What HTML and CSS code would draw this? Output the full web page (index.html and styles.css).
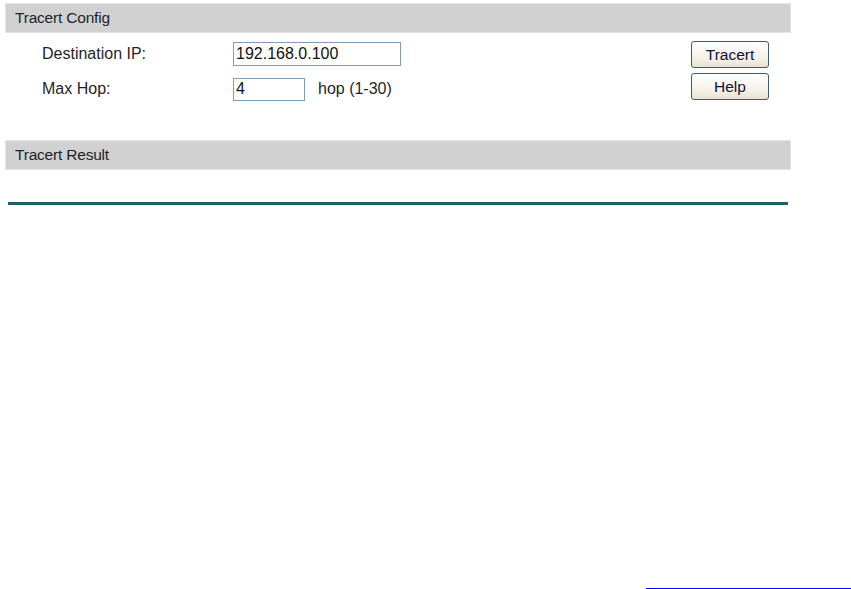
FILE: index.html
```html
<!DOCTYPE html>
<html lang="en">

<head>
    <meta charset="UTF-8">
    <meta name="viewport" content="width=device-width, initial-scale=1.0">
    <title>Tracert</title>
    <link rel="stylesheet" href="styles.css">
</head>

<body>
    <div class="page">
        <div class="title-bar">Tracert Config</div>
        <div class="config">
            <div class="fields">
                <div class="row">
                    <label class="lbl">Destination IP:</label>
                    <input type="text" class="ip-input" value="192.168.0.100">
                </div>
                <div class="row row-hop">
                    <label class="lbl">Max Hop:</label>
                    <input type="text" class="hop-input" value="4">
                    <span class="hint">hop (1-30)</span>
                </div>
            </div>
            <div class="actions">
                <button class="btn">Tracert</button>
                <button class="btn">Help</button>
            </div>
        </div>

        <div class="title-bar result-bar">Tracert Result</div>
        <div class="result"></div>
        <div class="divider"></div>
    </div>
    <div class="footer">
        <span class="foot-link"></span>
    </div>
</body>

</html>
```

FILE: styles.css
```css
* {
    box-sizing: border-box;
}

html,
body {
    height: 100%;
}

body {
    margin: 0;
    display: flex;
    flex-direction: column;
    font-family: "Liberation Sans", Arial, sans-serif;
    font-size: 16px;
    color: #1f1f2a;
    background: #fff;
}

.page {
    padding: 3px 0 0 5px;
}

.title-bar {
    width: 786px;
    height: 30px;
    line-height: 28px;
    padding-left: 9px;
    font-size: 15.5px;
    letter-spacing: -0.2px;
    background: #d1d1d1;
    border: 1px solid #e4e4e4;
}

.config {
    display: flex;
    width: 786px;
    padding: 9px 22px 0 37px;
}

.fields {
    display: flex;
    flex-direction: column;
}

.row {
    display: flex;
    align-items: center;
    height: 24px;
}

.row-hop {
    margin-top: 11px;
}

.lbl {
    width: 191px;
}

input {
    font-family: "Liberation Sans", Arial, sans-serif;
    font-size: 16px;
    color: #111;
    border: 1px solid #7f9db9;
    height: 24px;
    padding: 0 2px;
    outline: none;
}

.ip-input {
    width: 168px;
}

.hop-input {
    width: 72px;
    height: 23px;
}

.hint {
    margin-left: 13px;
}

.actions {
    margin-left: auto;
    display: flex;
    flex-direction: column;
    gap: 5px;
    margin-top: -1px;
}

.btn {
    width: 78px;
    height: 27px;
    padding: 0;
    font-family: "Liberation Sans", Arial, sans-serif;
    font-size: 15.5px;
    color: #10103a;
    border: 1px solid #3d5a7e;
    border-radius: 3px;
    background: linear-gradient(#ffffff, #f3f0e4 70%, #e8e3d0);
}

.result-bar {
    margin-top: 39px;
}

.result {
    height: 32px;
}

.divider {
    width: 780px;
    height: 3px;
    margin-left: 3px;
    background: #1f5e6b;
}

.footer {
    display: flex;
    justify-content: flex-end;
    margin-top: auto;
}

.foot-link {
    width: 205px;
    height: 1px;
    background: #0000ff;
}
```
